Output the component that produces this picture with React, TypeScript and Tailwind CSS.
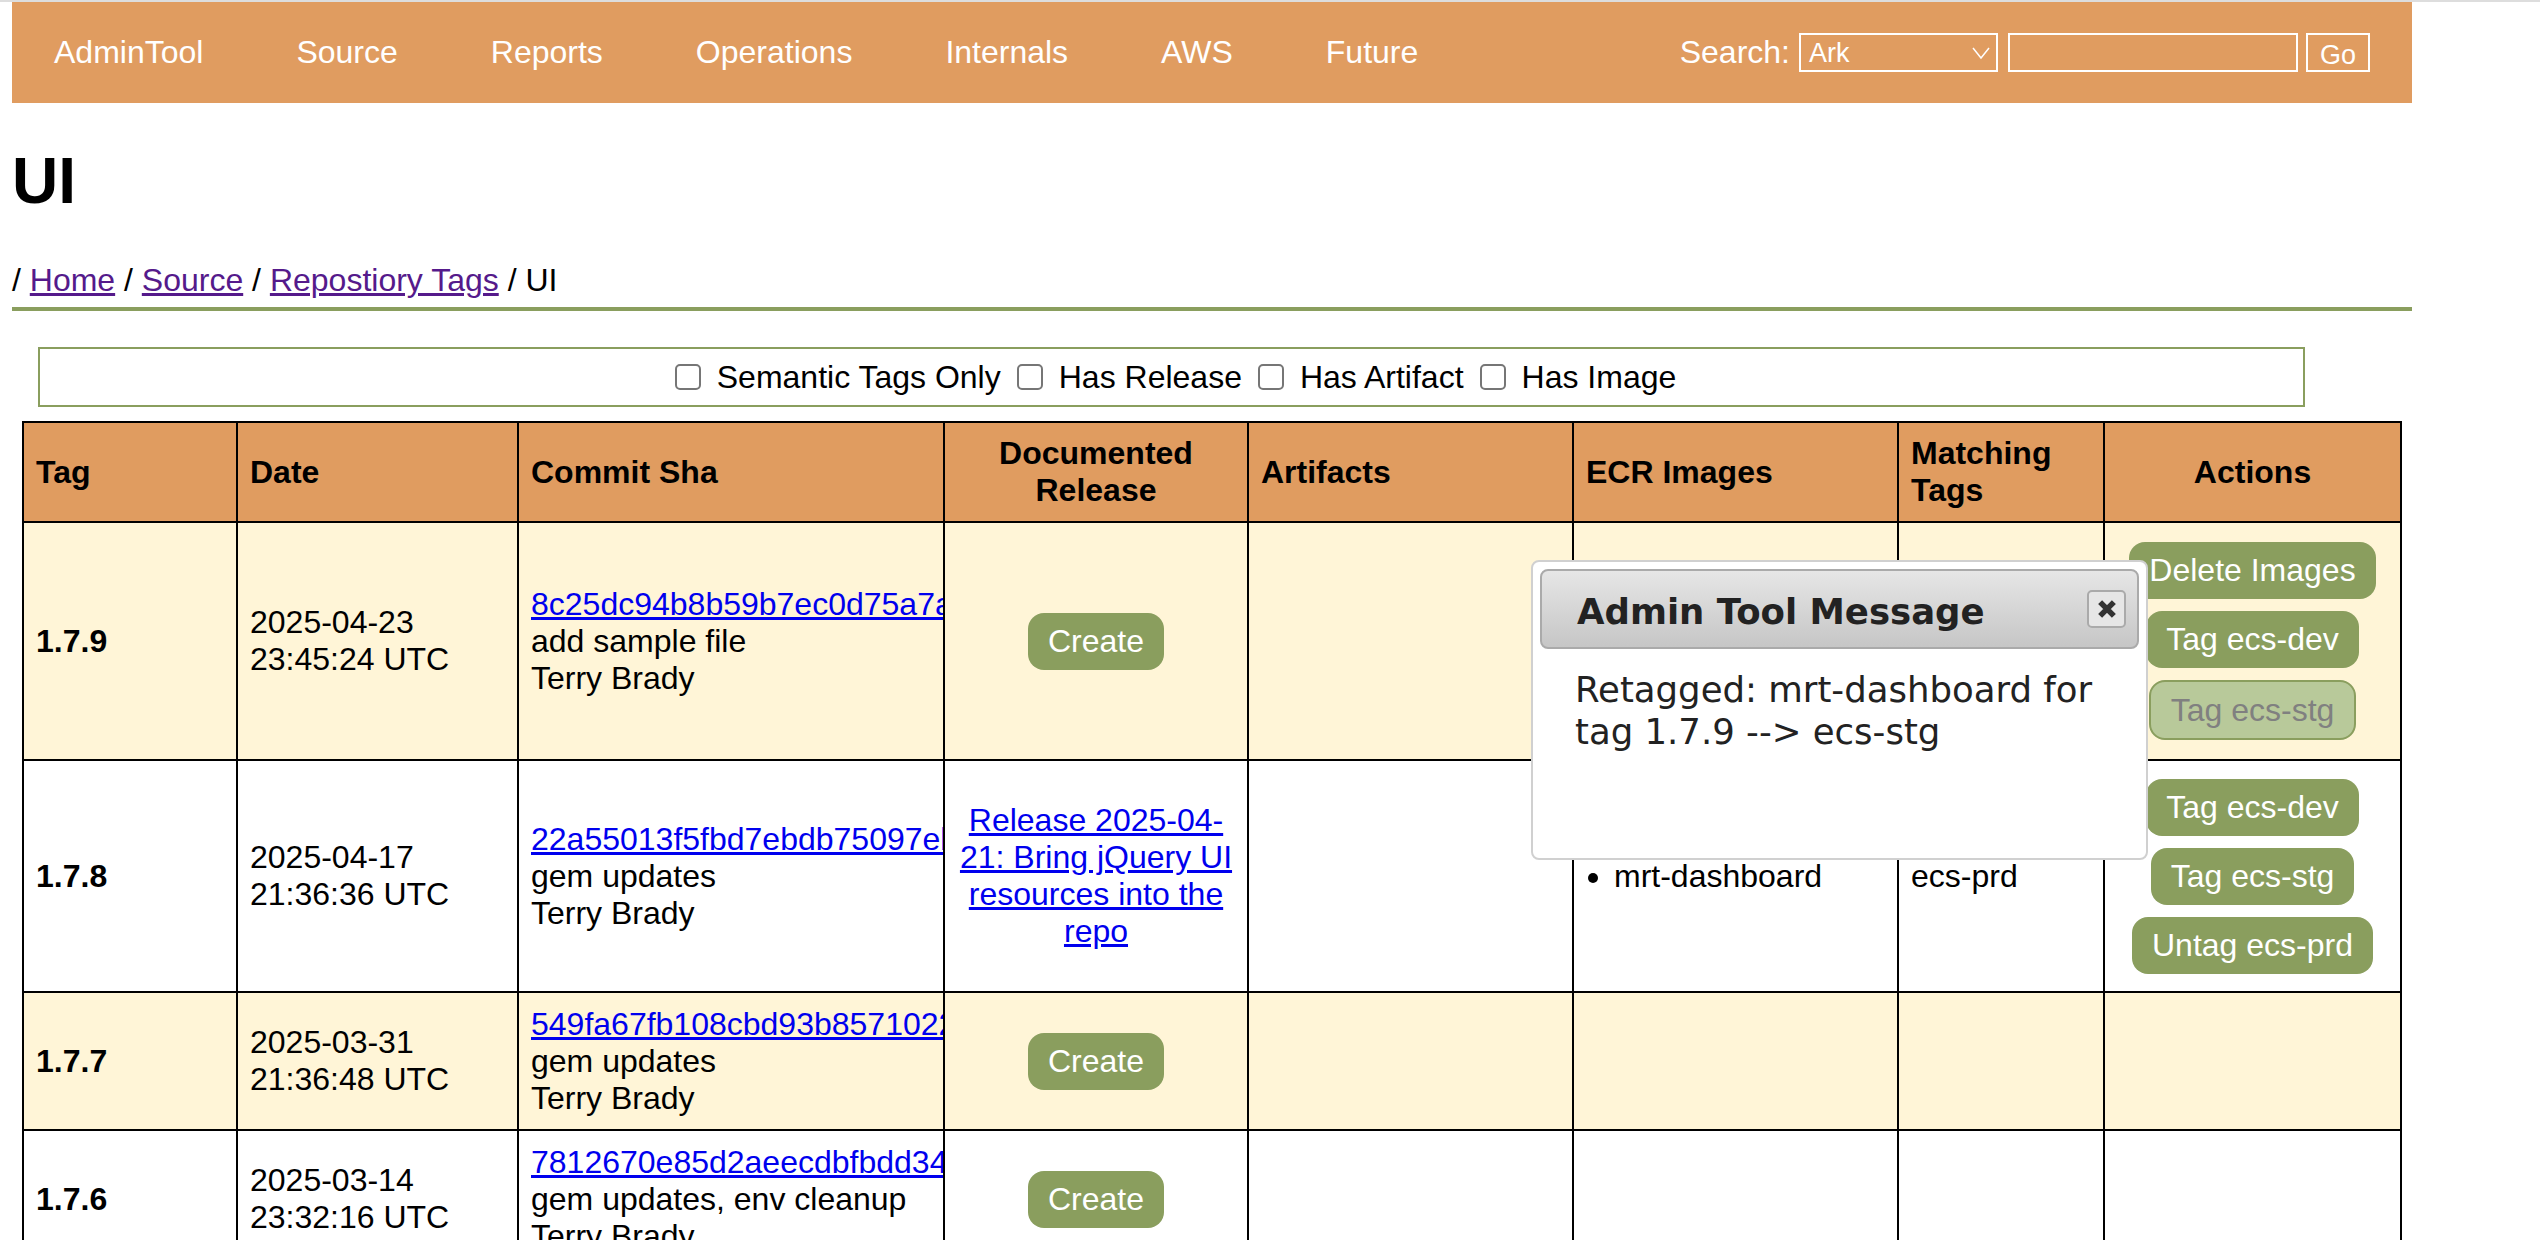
const headerCell = "border-2 border-black bg-[#e09c60] px-3 py-3 font-bold align-middle";
const cell = "border-2 border-black px-3 py-3 align-middle overflow-hidden";
const button = "rounded-[16px] bg-[#8a9e5e] px-5 py-[10px] text-white";

const navItems = ["AdminTool", "Source", "Reports", "Operations", "Internals", "AWS", "Future"];
const filters = ["Semantic Tags Only", "Has Release", "Has Artifact", "Has Image"];

function ActionButton({ label }: { label: string }) {
    return <button className={button}>{label}</button>;
}

function Commit({ sha, message }: { sha: string; message: string }) {
    return (
        <td className={cell}>
            <a href="#" className="block whitespace-nowrap text-[#0000ee] underline">
                {sha}
            </a>
            <div>{message}</div>
            <div>Terry Brady</div>
        </td>
    );
}

function DateCell({ day, time }: { day: string; time: string }) {
    return (
        <td className={cell}>
            {day}
            <br />
            {time}
        </td>
    );
}

function CreateCell() {
    return (
        <td className={`${cell} text-center`}>
            <ActionButton label="Create" />
        </td>
    );
}

export default function App() {
    return (
        <div className="relative h-[1240px] overflow-hidden border-t-2 border-[#dddddd] bg-white font-['Liberation_Sans',Arial,sans-serif] text-[32px] leading-[37px] text-black">
            <nav className="ml-3 flex h-[101px] w-[2400px] items-center justify-between bg-[#e09c60] px-[42px] text-white">
                <div className="flex items-center gap-[93px]">
                    {navItems.map((item) => (
                        <a key={item} href="#">
                            {item}
                        </a>
                    ))}
                </div>
                <div className="flex items-center">
                    <span className="mr-[9px]">Search:</span>
                    <div className="mr-[10px] flex h-[39px] w-[199px] items-center justify-between border-2 border-white pl-2 pr-[5px] text-[27px]">
                        <span className="pt-[2px]">Ark</span>
                        <svg viewBox="0 0 20 14" className="h-[14px] w-5" fill="none" stroke="white" strokeWidth="1.5">
                            <path d="M2 2l8 10 8-10" />
                        </svg>
                    </div>
                    <input type="text" className="mr-2 h-[39px] w-[290px] border-2 border-white bg-transparent" />
                    <button className="h-[39px] w-[64px] border-2 border-white pt-[2px] text-[27px] text-white">Go</button>
                </div>
            </nav>

            <h1 className="ml-3 mt-[41px] text-[64px] font-bold leading-[74px]">UI</h1>

            <div className="ml-3 mt-[44px] w-[2400px] border-b-4 border-[#8a9e5e] pb-[8px]">
                / <a href="#" className="text-[#551a8b] underline">Home</a> /{" "}
                <a href="#" className="text-[#551a8b] underline">Source</a> /{" "}
                <a href="#" className="text-[#551a8b] underline">Repostiory Tags</a> / UI
            </div>

            <div className="ml-[38px] mt-9 flex h-[60px] w-[2267px] items-center justify-center gap-4 border-2 border-[#8a9e5e] pl-2">
                {filters.map((filter) => (
                    <label key={filter} className="flex items-center gap-4">
                        <input
                            type="checkbox"
                            className="h-[26px] w-[26px] appearance-none rounded-[5px] border-2 border-[#767676] bg-white"
                        />
                        {filter}
                    </label>
                ))}
            </div>

            <table className="ml-[22px] mt-[14px] w-[2380px] table-fixed border-collapse">
                <colgroup>
                    <col className="w-[214px]" />
                    <col className="w-[281px]" />
                    <col className="w-[426px]" />
                    <col className="w-[304px]" />
                    <col className="w-[325px]" />
                    <col className="w-[325px]" />
                    <col className="w-[206px]" />
                    <col className="w-[297px]" />
                </colgroup>
                <thead>
                    <tr className="h-[100px]">
                        <th className={`${headerCell} text-left`}>Tag</th>
                        <th className={`${headerCell} text-left`}>Date</th>
                        <th className={`${headerCell} text-left`}>Commit Sha</th>
                        <th className={`${headerCell} text-center`}>Documented Release</th>
                        <th className={`${headerCell} text-left`}>Artifacts</th>
                        <th className={`${headerCell} text-left`}>ECR Images</th>
                        <th className={`${headerCell} text-left`}>Matching Tags</th>
                        <th className={`${headerCell} text-center`}>Actions</th>
                    </tr>
                </thead>
                <tbody>
                    <tr className="h-[238px] bg-[#fff5d7]">
                        <td className={`${cell} font-bold`}>1.7.9</td>
                        <DateCell day="2025-04-23" time="23:45:24 UTC" />
                        <Commit sha="8c25dc94b8b59b7ec0d75a7a1f3e60b2d47c9a18" message="add sample file" />
                        <CreateCell />
                        <td className={cell}></td>
                        <td className={cell}></td>
                        <td className={cell}></td>
                        <td className={cell}>
                            <div className="flex flex-col items-center gap-3">
                                <ActionButton label="Delete Images" />
                                <ActionButton label="Tag ecs-dev" />
                                <button
                                    disabled
                                    className="rounded-[16px] border-2 border-[#8a9e5e] bg-[#b8c99a] px-5 py-[9.5px] text-[#808080]"
                                >
                                    Tag ecs-stg
                                </button>
                            </div>
                        </td>
                    </tr>
                    <tr className="h-[232px]">
                        <td className={`${cell} font-bold`}>1.7.8</td>
                        <DateCell day="2025-04-17" time="21:36:36 UTC" />
                        <Commit sha="22a55013f5fbd7ebdb75097eb4c1d8306ab27e95" message="gem updates" />
                        <td className={`${cell} text-center`}>
                            <a href="#" className="text-[#0000ee] underline">
                                Release 2025-04-21: Bring jQuery UI resources into the repo
                            </a>
                        </td>
                        <td className={cell}></td>
                        <td className={cell}>
                            <ul className="list-disc pl-7">
                                <li>mrt-dashboard</li>
                            </ul>
                        </td>
                        <td className={cell}>ecs-prd</td>
                        <td className={cell}>
                            <div className="flex flex-col items-center gap-3">
                                <ActionButton label="Tag ecs-dev" />
                                <ActionButton label="Tag ecs-stg" />
                                <ActionButton label="Untag ecs-prd" />
                            </div>
                        </td>
                    </tr>
                    <tr className="h-[138px] bg-[#fff5d7]">
                        <td className={`${cell} font-bold`}>1.7.7</td>
                        <DateCell day="2025-03-31" time="21:36:48 UTC" />
                        <Commit sha="549fa67fb108cbd93b8571022de6a4c07f13b98e" message="gem updates" />
                        <CreateCell />
                        <td className={cell}></td>
                        <td className={cell}></td>
                        <td className={cell}></td>
                        <td className={cell}></td>
                    </tr>
                    <tr className="h-[138px]">
                        <td className={`${cell} font-bold`}>1.7.6</td>
                        <DateCell day="2025-03-14" time="23:32:16 UTC" />
                        <Commit sha="7812670e85d2aeecdbfbdd34a06c7e19b5f2d843" message="gem updates, env cleanup" />
                        <CreateCell />
                        <td className={cell}></td>
                        <td className={cell}></td>
                        <td className={cell}></td>
                        <td className={cell}></td>
                    </tr>
                </tbody>
            </table>

            <div className="absolute left-[1531px] top-[558px] h-[300px] w-[617px] rounded-[8px] border-2 border-[#d0d0d0] bg-white p-[7px] font-['DejaVu_Sans',Verdana,sans-serif] text-[#222222]">
                <div className="flex h-[80px] items-center justify-between rounded-[8px] border-2 border-[#aaaaaa] bg-gradient-to-b from-[#e6e6e6] to-[#c6c6c6] pl-[35px] pr-[11px]">
                    <span className="pt-[5px] text-[35.5px] font-bold">Admin Tool Message</span>
                    <span className="flex h-[38px] w-[39px] items-center justify-center rounded-[5px] border-2 border-[#aaaaaa] bg-[#e6e6e6]">
                        <svg viewBox="0 0 16 16" className="h-[20px] w-[20px]" stroke="#333333" strokeWidth="4.5">
                            <path d="M2.5 2.5l11 11M13.5 2.5l-11 11" />
                        </svg>
                    </span>
                </div>
                <p className="pl-[35px] pr-[20px] pt-[20px] text-[35.5px] leading-[42px]">
                    Retagged: mrt-dashboard for tag 1.7.9 --&gt; ecs-stg
                </p>
            </div>
        </div>
    );
}
